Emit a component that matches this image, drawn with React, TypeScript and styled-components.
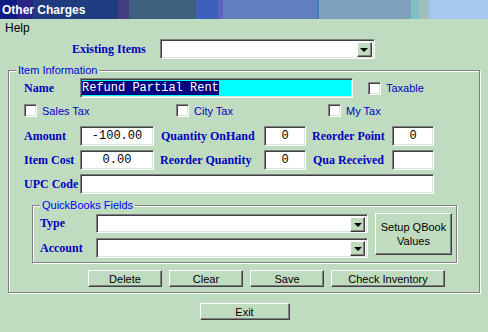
import React from 'react';
import styled, { createGlobalStyle } from 'styled-components';

const GlobalStyle = createGlobalStyle`
  html, body {
    margin: 0;
    padding: 0;
    background: #c0dcc0;
  }
  body {
    width: 488px;
    height: 332px;
    overflow: hidden;
    font-family: "Liberation Sans", Arial, sans-serif;
    font-size: 11px;
  }
`;

const Window = styled.div`
  width: 488px;
  height: 332px;
  background: #c0dcc0;
  display: flex;
  flex-direction: column;
`;

const TitleBar = styled.div`
  height: 19px;
  display: flex;
  align-items: center;
  padding-left: 2px;
  color: #fff;
  font-weight: bold;
  font-size: 12px;
  background: linear-gradient(
    to right,
    #101c84 0 17px,
    #2a2486 17px 33px,
    #203c80 33px 118px,
    #443c80 118px 129px,
    #3f5f7f 129px 196px,
    #3f5fbf 196px 218px,
    #5f5fbf 218px 223px,
    #5f7fbf 223px 317px,
    #4080c0 317px 319px,
    #7f9fbf 319px 411px,
    #7fbfbf 411px 419px,
    #9fbfbf 419px 429px,
    #a4c8f0 429px
  );
`;

const MenuBar = styled.div`
  height: 18px;
  display: flex;
  align-items: center;
  padding-left: 5px;
  color: #000;
  font-size: 12px;
`;

const Label = styled.div<{ $w?: number }>`
  width: ${(p) => (p.$w ? `${p.$w}px` : 'auto')};
  flex: none;
  font-family: "Liberation Serif", "Times New Roman", serif;
  font-weight: bold;
  font-size: 12px;
  color: #0000c0;
  white-space: nowrap;
`;

const TopRow = styled.div`
  display: flex;
  align-items: flex-start;
  margin-top: 2px;
  padding-left: 72px;
  height: 20px;
  ${Label} {
    padding-top: 3px;
    margin-right: 14px;
  }
`;

const Sunken = styled.div<{ $w: number; $h?: number; $bg?: string }>`
  box-sizing: border-box;
  width: ${(p) => p.$w}px;
  height: ${(p) => p.$h ?? 20}px;
  flex: none;
  background: ${(p) => p.$bg ?? '#fff'};
  border: 1px solid;
  border-color: #808080 #fff #fff #808080;
  box-shadow: inset 1px 1px 0 #404040, inset -1px -1px 0 #d8e8d8;
`;

const TextBox = styled(Sunken)<{ $center?: boolean }>`
  display: flex;
  align-items: center;
  justify-content: ${(p) => (p.$center ? 'center' : 'flex-start')};
  padding-left: ${(p) => (p.$center ? 0 : 1)}px;
  font-family: "Liberation Mono", "Courier New", monospace;
  font-size: 12px;
  color: #000;
  white-space: pre;
`;

const Selected = styled.span`
  background: #000080;
  color: #fff;
  line-height: 14px;
`;

const Combo = styled(Sunken)`
  display: flex;
  justify-content: flex-end;
  align-items: flex-start;
  padding: 2px 2px 0 0;
`;

const DropButton = styled.div`
  box-sizing: border-box;
  width: 15px;
  height: 15px;
  background: #c0dcc0;
  border: 1px solid;
  border-color: #fff #404040 #404040 #fff;
  box-shadow: inset -1px -1px 0 #808080;
  display: flex;
  align-items: center;
  justify-content: center;
  &::after {
    content: '';
    border-left: 4px solid transparent;
    border-right: 4px solid transparent;
    border-top: 4px solid #000;
    margin-top: 1px;
  }
`;

const Group = styled.fieldset<{ $w: number; $ml: number; $mt: number; $pb: number }>`
  box-sizing: border-box;
  width: ${(p) => p.$w}px;
  margin: ${(p) => p.$mt}px 0 0 ${(p) => p.$ml}px;
  padding: 0 0 ${(p) => p.$pb}px 0;
  border: 1px solid #808080;
  box-shadow: inset 1px 1px 0 #fff, 1px 1px 0 #fff;
  min-width: 0;
`;

const Legend = styled.legend<{ $color?: string }>`
  margin-left: 7px;
  padding: 0 2px;
  background: #c0dcc0;
  color: ${(p) => p.$color ?? '#0000d0'};
  font-size: 11px;
  line-height: 13px;
`;

const Row = styled.div<{ $mt: number; $h?: number; $pl?: number }>`
  display: flex;
  align-items: center;
  margin-top: ${(p) => p.$mt}px;
  height: ${(p) => p.$h ?? 20}px;
  padding-left: ${(p) => p.$pl ?? 15}px;
`;

const CheckItem = styled.label<{ $w?: number; $ml?: number }>`
  display: flex;
  align-items: center;
  gap: 5px;
  width: ${(p) => (p.$w ? `${p.$w}px` : 'auto')};
  margin-left: ${(p) => p.$ml ?? 0}px;
  flex: none;
  color: #0000c0;
  font-size: 11px;
`;

const Box = styled.span`
  box-sizing: border-box;
  width: 13px;
  height: 13px;
  background: #fff;
  border: 1px solid;
  border-color: #808080 #fff #fff #808080;
  box-shadow: inset 1px 1px 0 #404040, inset -1px -1px 0 #d8e8d8;
`;

const Gap = styled.div<{ $w: number }>`
  width: ${(p) => p.$w}px;
  flex: none;
`;

const QbBody = styled.div`
  display: flex;
  align-items: flex-start;
  padding-left: 7px;
`;

const QbFields = styled.div`
  display: flex;
  flex-direction: column;
`;

const Button = styled.button<{ $w: number; $h?: number }>`
  box-sizing: border-box;
  width: ${(p) => p.$w}px;
  height: ${(p) => p.$h ?? 17}px;
  flex: none;
  padding: 0;
  background: #c0dcc0;
  border: 1px solid;
  border-color: #fff #404040 #404040 #fff;
  box-shadow: inset -1px -1px 0 #808080;
  font-family: "Liberation Sans", Arial, sans-serif;
  font-size: 11px;
  line-height: 14px;
  color: #000;
`;

const ButtonRow = styled.div`
  display: flex;
  gap: 7px;
  margin-top: 7px;
  padding-left: 79px;
`;

const Footer = styled.div`
  display: flex;
  justify-content: center;
  margin-top: 10px;
  padding-left: 1px;
`;

const ComboBox: React.FC<{ w: number; h?: number }> = ({ w, h }) => (
  <Combo $w={w} $h={h}>
    <DropButton />
  </Combo>
);

const Check: React.FC<{ text: string; w?: number; ml?: number }> = ({ text, w, ml }) => (
  <CheckItem $w={w} $ml={ml}>
    <Box />
    {text}
  </CheckItem>
);

export default function App() {
  return (
    <Window>
      <GlobalStyle />
      <TitleBar>Other Charges</TitleBar>
      <MenuBar>Help</MenuBar>

      <TopRow>
        <Label>Existing Items</Label>
        <ComboBox w={215} />
      </TopRow>

      <Group $w={472} $ml={8} $mt={5} $pb={5}>
        <Legend>Item Information</Legend>

        <Row $mt={1}>
          <Label $w={56}>Name</Label>
          <TextBox $w={273} $bg="#00ffff">
            <Selected>Refund Partial Rent</Selected>
          </TextBox>
          <Check text="Taxable" ml={15} />
        </Row>

        <Row $mt={6} $h={13}>
          <Check text="Sales Tax" w={152} />
          <Check text="City Tax" w={152} />
          <Check text="My Tax" />
        </Row>

        <Row $mt={9}>
          <Label $w={56}>Amount</Label>
          <TextBox $w={74} $center>-100.00</TextBox>
          <Gap $w={7} />
          <Label $w={103}>Quantity OnHand</Label>
          <TextBox $w={42} $center>0</TextBox>
          <Gap $w={6} />
          <Label $w={80}>Reorder Point</Label>
          <TextBox $w={42} $center>0</TextBox>
        </Row>

        <Row $mt={4}>
          <Label $w={56}>Item Cost</Label>
          <TextBox $w={74} $center>0.00</TextBox>
          <Gap $w={6} />
          <Label $w={104}>Reorder Quantity</Label>
          <TextBox $w={42} $center>0</TextBox>
          <Gap $w={7} />
          <Label $w={79}>Qua Received</Label>
          <TextBox $w={42} $center />
        </Row>

        <Row $mt={4}>
          <Label $w={56}>UPC Code</Label>
          <TextBox $w={354} />
        </Row>

        <Group $w={425} $ml={23} $mt={5} $pb={4}>
          <Legend $color="#0000ff">QuickBooks Fields</Legend>
          <QbBody>
            <QbFields>
              <Row $mt={2} $h={19} $pl={0}>
                <Label $w={56}>Type</Label>
                <ComboBox w={272} h={19} />
              </Row>
              <Row $mt={5} $pl={0}>
                <Label $w={56}>Account</Label>
                <ComboBox w={272} />
              </Row>
            </QbFields>
            <Gap $w={7} />
            <Button $w={77} $h={42} style={{ marginTop: 1 }}>
              Setup QBook
              <br />
              Values
            </Button>
          </QbBody>
        </Group>

        <ButtonRow>
          <Button $w={74}>Delete</Button>
          <Button $w={74}>Clear</Button>
          <Button $w={74}>Save</Button>
          <Button $w={114}>Check Inventory</Button>
        </ButtonRow>
      </Group>

      <Footer>
        <Button $w={90}>Exit</Button>
      </Footer>
    </Window>
  );
}
